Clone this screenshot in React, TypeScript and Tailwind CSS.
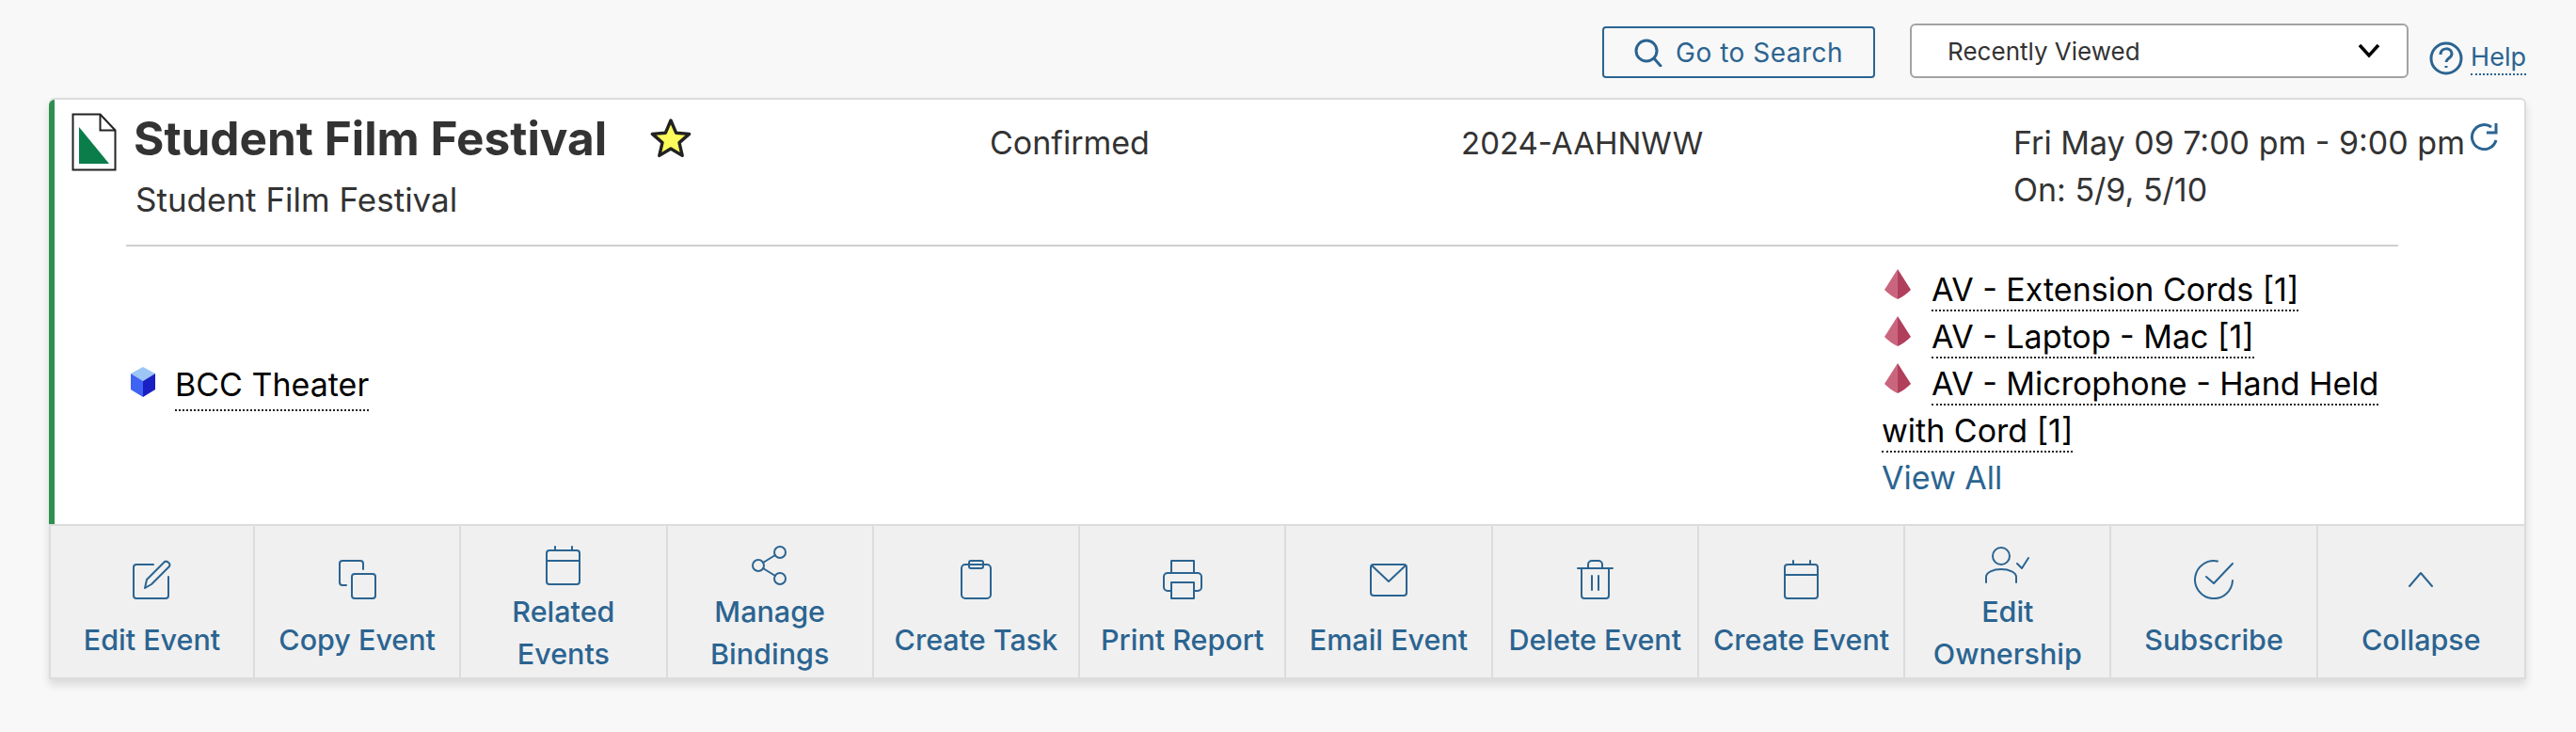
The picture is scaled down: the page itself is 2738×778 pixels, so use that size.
import type { ReactNode } from "react"

function Icon({ w = 42, children }: { w?: number; children: ReactNode }) {
    return (
        <svg
            width={w}
            height="42"
            viewBox={`0 0 ${w} 42`}
            fill="none"
            stroke="currentColor"
            strokeWidth="2"
            strokeLinecap="round"
            strokeLinejoin="round"
        >
            {children}
        </svg>
    )
}

const calendar = (
    <Icon w={37}>
        <rect x="1" y="5" width="35" height="36" rx="3" />
        <path d="M1 16h35M10 1v4M28 1v4" />
    </Icon>
)

const actions: { label: ReactNode; icon: ReactNode; twoLines?: boolean }[] = [
    {
        label: "Edit Event",
        icon: (
            <Icon>
                <path d="M22 5H4a3 3 0 0 0-3 3v30a3 3 0 0 0 3 3h31a3 3 0 0 0 3-3V18" />
                <path d="M13 30l2-9L33 3c2-3 8 0 6 4L20 26z" />
            </Icon>
        ),
    },
    {
        label: "Copy Event",
        icon: (
            <Icon>
                <path d="M27 10V4a3 3 0 0 0-3-3H5a3 3 0 0 0-3 3v20a3 3 0 0 0 3 3h4" />
                <rect x="15" y="15" width="25" height="26" rx="3" />
            </Icon>
        ),
    },
    { label: <>Related<br />Events</>, icon: calendar, twoLines: true },
    {
        label: <>Manage<br />Bindings</>,
        twoLines: true,
        icon: (
            <Icon w={38}>
                <circle cx="30" cy="7" r="6" />
                <circle cx="7" cy="21" r="6" />
                <circle cx="30" cy="35" r="6" />
                <path d="M25 10L12 18M12 24l13 8" />
            </Icon>
        ),
    },
    {
        label: "Create Task",
        icon: (
            <Icon w={33}>
                <rect x="1" y="5" width="31" height="36" rx="4" />
                <rect x="9" y="1" width="15" height="8" rx="2" />
            </Icon>
        ),
    },
    {
        label: "Print Report",
        icon: (
            <Icon>
                <path d="M9 14V1h24v13" />
                <path d="M9 33H5a4 4 0 0 1-4-4V18a4 4 0 0 1 4-4h32a4 4 0 0 1 4 4v11a4 4 0 0 1-4 4h-4" />
                <rect x="9" y="24" width="24" height="17" />
            </Icon>
        ),
    },
    {
        label: "Email Event",
        icon: (
            <Icon w={40}>
                <rect x="1" y="5" width="38" height="33" rx="3" />
                <path d="M2 6l18 17L38 6" />
            </Icon>
        ),
    },
    {
        label: "Delete Event",
        icon: (
            <Icon w={39}>
                <path d="M1 9h37M5 9v29a3 3 0 0 0 3 3h23a3 3 0 0 0 3-3V9M12 9V5a4 4 0 0 1 4-4h7a4 4 0 0 1 4 4v4M16 17v15M23 17v15" />
            </Icon>
        ),
    },
    { label: "Create Event", icon: calendar },
    {
        label: <>Edit<br />Ownership</>,
        twoLines: true,
        icon: (
            <Icon w={47}>
                <circle cx="17" cy="11" r="9" />
                <path d="M1 39v-6a16 8 0 0 1 32 0v6M34 19l5 5 7-11" />
            </Icon>
        ),
    },
    {
        label: "Subscribe",
        icon: (
            <Icon>
                <path d="M25 1.5A20 20 0 1 0 41 22" />
                <path d="M13 18l8 7L41 4" />
            </Icon>
        ),
    },
    {
        label: "Collapse",
        icon: (
            <Icon w={26}>
                <path d="M1 28l12-14 12 14" />
            </Icon>
        ),
    },
]

function DocIcon() {
    return (
        <svg width="48" height="62" viewBox="0 0 48 62" className="shrink-0">
            <path d="M1.5 1.5h29l16 17v42h-45z" fill="#fff" stroke="#222" strokeWidth="2" />
            <path d="M30.5 1.5v17h16" fill="none" stroke="#222" strokeWidth="2" />
            <path d="M8 15l32 39H8z" fill="#0a7d4a" />
        </svg>
    )
}

function Star() {
    return (
        <svg width="44" height="42" viewBox="0 0 44 42">
            <path
                d="M22 2l5.6 13.2 14 1.2-10.6 9.2 3.2 13.8L22 32l-12.2 7.4L13 25.6 2.4 16.4l14-1.2z"
                fill="#fbfb5c"
                stroke="#222"
                strokeWidth="3.4"
                strokeLinejoin="round"
            />
        </svg>
    )
}

function Pyramid() {
    return (
        <svg width="30" height="32" viewBox="0 0 30 32" className="inline-block align-[2px] ml-[2px] mr-[21px]">
            <path d="M15 0L1 22q7 7 14 10z" fill="#c9667d" />
            <path d="M15 0l14 22q-7 7-14 10z" fill="#b03f5c" />
        </svg>
    )
}

function Cube() {
    return (
        <svg width="28" height="32" viewBox="0 0 28 32" className="shrink-0 -mt-[7px]">
            <path d="M14 0l13 7-13 8L1 7z" fill="#9cc6f5" />
            <path d="M1 7l13 8v17L1 24z" fill="#3f63f2" />
            <path d="M27 7l-13 8v17l13-8z" fill="#1a1fc4" />
        </svg>
    )
}

function ItemLink({ children }: { children: ReactNode }) {
    return (
        <span className="text-black border-b-2 border-dotted border-[#222] pb-[1px]">{children}</span>
    )
}

export default function App() {
    return (
        <div className="min-h-[778px] bg-[#f8f8f8] font-['Inter','Liberation_Sans',sans-serif] pt-[25px] pl-[52px] pr-[53px] text-[#333]">
            <div className="flex items-end justify-end h-[58px] mb-[21px]">
                <button className="flex items-center gap-[14px] h-[55px] w-[290px] px-[32px] border-2 border-[#2b6491] rounded-[4px] text-[#2b6491] text-[28px] tracking-[0.5px] whitespace-nowrap">
                    <svg width="30" height="30" viewBox="0 0 30 30" fill="none" stroke="currentColor" strokeWidth="3" className="shrink-0">
                        <circle cx="13" cy="13" r="11" />
                        <path d="M21 21l7 8" strokeLinecap="round" />
                    </svg>
                    Go to Search
                </button>
                <div className="flex items-center justify-between ml-[37px] h-[58px] w-[530px] pl-[38px] pr-[28px] bg-white border-2 border-[#a3a3a3] rounded-[6px] text-[26px] text-[#333]">
                    Recently Viewed
                    <svg width="24" height="16" viewBox="0 0 24 16" fill="none" stroke="#000" strokeWidth="3.5">
                        <path d="M2 2l10 11L22 2" />
                    </svg>
                </div>
                <div className="flex items-center ml-[22px] mb-[3px] text-[#2b6491] text-[27px]">
                    <svg width="36" height="36" viewBox="0 0 36 36" fill="none" stroke="currentColor" strokeWidth="3" className="mr-[8px]">
                        <circle cx="18" cy="18" r="16" />
                        <path d="M12 14c0-8 12-8 12-1 0 5-6 5-6 9M18 26v2" />
                    </svg>
                    <span className="border-b-2 border-dotted border-[#2b6491] leading-[34px]">Help</span>
                </div>
            </div>

            <div className="bg-white border-2 border-[#dcdcdc] rounded-t-[6px] shadow-[0_6px_10px_rgba(0,0,0,0.12)]">
                <div className="border-l-[6px] border-l-[#2f8f4f] -ml-[2px] rounded-tl-[6px]">
                    <div className="flex pt-[14px] pl-[18px] h-[154px] text-[34px]">
                        <DocIcon />
                        <div className="w-[928px] pl-[18px] -mt-[3px]">
                            <div className="flex items-center gap-[46px] h-[60px] text-[49.5px] font-bold text-[#333] whitespace-nowrap">
                                Student Film Festival
                                <Star />
                            </div>
                            <div className="mt-[9px] pl-[2px] text-[35px]">Student Film Festival</div>
                        </div>
                        <div className="w-[501px] pt-[7px] leading-[50px]">Confirmed</div>
                        <div className="w-[587px] pt-[7px] leading-[50px] text-[33px]">2024-AAHNWW</div>
                        <div className="pt-[7px] leading-[50px] whitespace-nowrap">
                            <div>Fri May 09 7:00 pm - 9:00 pm</div>
                            <div>On: 5/9, 5/10</div>
                        </div>
                        <svg width="33" height="30" viewBox="0 0 33 30" fill="none" stroke="#2b6491" strokeWidth="3" className="ml-[4px] mt-[10px] shrink-0">
                            <path d="M24 5A13 13 0 1 0 29 19M29 1v10H19" />
                        </svg>
                    </div>
                    <div className="h-[2px] bg-[#cfcfcf] ml-[76px] mr-[134px]" />
                    <div className="flex items-center h-[295px] text-[34px]">
                        <div className="flex items-center gap-[20px] w-[1942px] pl-[80px]">
                            <Cube />
                            <ItemLink>BCC Theater</ItemLink>
                        </div>
                        <div className="w-[560px] leading-[50px] -mt-[3px]">
                            <div><Pyramid /><ItemLink>AV - Extension Cords [1]</ItemLink></div>
                            <div><Pyramid /><ItemLink>AV - Laptop - Mac [1]</ItemLink></div>
                            <div><Pyramid /><ItemLink>AV - Microphone - Hand Held</ItemLink></div>
                            <div><ItemLink>with Cord [1]</ItemLink></div>
                            <div className="text-[#2b6491]">View All</div>
                        </div>
                    </div>
                </div>
                <div className="grid grid-cols-[217px_repeat(11,minmax(0,1fr))] h-[165px] bg-[#f0f0f0] border-t-2 border-[#dcdcdc] -mx-[2px] -mb-[2px] border-x-2 border-b-2">
                    {actions.map((a, i) => (
                        <div
                            key={i}
                            className="flex flex-col items-center justify-center pt-[17px] gap-[5px] border-r-2 border-[#dcdcdc] last:border-r-0 text-[#2b6491] text-[30.5px] font-medium leading-[45px] text-center whitespace-nowrap"
                        >
                            {a.icon}
                            <div className={a.twoLines ? "" : "mt-[15px]"}>{a.label}</div>
                        </div>
                    ))}
                </div>
            </div>
        </div>
    )
}
